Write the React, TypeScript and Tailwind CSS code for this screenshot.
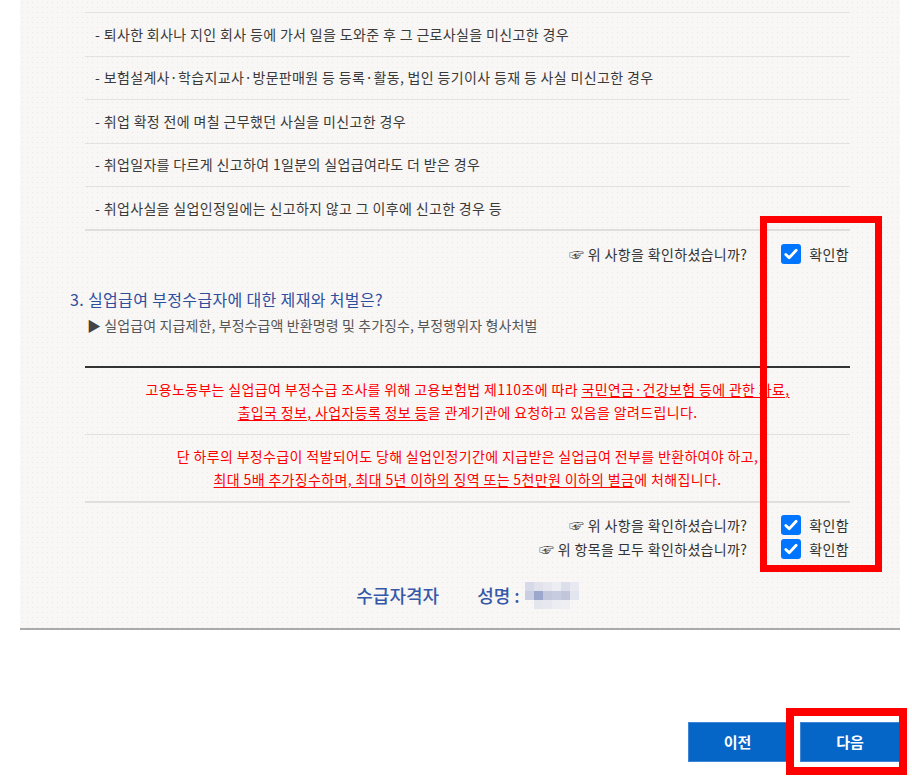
import React from "react";

const FONT = { fontFamily: '"Noto Sans CJK KR", "Noto Sans", sans-serif' };

const rows = [
  "- 퇴사한 회사나 지인 회사 등에 가서 일을 도와준 후 그 근로사실을 미신고한 경우",
  "- 보험설계사·학습지교사·방문판매원 등 등록·활동, 법인 등기이사 등재 등 사실 미신고한 경우",
  "- 취업 확정 전에 며칠 근무했던 사실을 미신고한 경우",
  "- 취업일자를 다르게 신고하여 1일분의 실업급여라도 더 받은 경우",
  "- 취업사실을 실업인정일에는 신고하지 않고 그 이후에 신고한 경우 등",
];

function Check() {
  return (
    <span className="flex h-5 w-5 items-center justify-center rounded-[3px] bg-[#0075ff]">
      <svg viewBox="0 0 20 20" className="h-5 w-5">
        <path
          d="M4.8 10.4l3.4 3.4L15.2 6.2"
          fill="none"
          stroke="white"
          strokeWidth="2.8"
          strokeLinecap="round"
          strokeLinejoin="round"
        />
      </svg>
    </span>
  );
}

function Confirm({ text }: { text: string }) {
  return (
    <div className="flex h-6 items-center justify-end text-[14px] text-[#333]">
      <span>
        <span className="text-[15px]">☞</span>
        {text}
      </span>
      <span className="ml-[34px]">
        <Check />
      </span>
      <span className="ml-2 mr-[1px]">확인함</span>
    </div>
  );
}

const blur = [
  ["bg-[#d6d9e7]", "bg-[#e1e2ec]", "bg-[#e7e8ef]", "bg-[#eceef3]", "bg-[#dcdee9]", "bg-[#e9eaf1]"],
  ["bg-[#c9cee1]", "bg-[#9ba7cc]", "bg-[#c3c8dd]", "bg-[#c8cce0]", "bg-[#c1c6db]", "bg-[#e3e5ee]"],
  ["bg-transparent", "bg-[#e4e6ee]", "bg-[#e6e7ef]", "bg-[#ecedf2]", "bg-[#eeeff3]", "bg-transparent"],
];

export default function App() {
  return (
    <div className="relative h-[781px] w-[912px] overflow-hidden bg-white" style={FONT}>
      <div className="ml-[20px] w-[880px] border-b-2 border-[#aaaaaa] bg-[#f8f7f5] bg-[radial-gradient(circle,#ebe9e5_0.8px,transparent_1px)] bg-[length:5px_5px] pb-[20px] pl-[65px] pr-[50px] tracking-[0.35px]">
        <div className="h-[12px]" />
        <div className="border-t border-[#e3e2df]">
          {rows.map((r, i) => (
            <div
              key={i}
              className={
                i === rows.length - 1
                  ? "flex h-[44px] items-center border-b-2 border-[#dfdedb] pl-[10px] text-[14px] text-[#3a3a3a]"
                  : "flex h-[43.5px] items-center border-b border-[#e3e2df] pl-[10px] text-[14px] text-[#3a3a3a]"
              }
            >
              {r}
            </div>
          ))}
        </div>
        <div className="mt-[11px]">
          <Confirm text=" 위 사항을 확인하셨습니까?" />
        </div>
        <div className="-ml-[15px] mt-[21px] text-[16px] leading-[24px] text-[#2f4e9e]">
          3. 실업급여 부정수급자에 대한 제재와 처벌은?
        </div>
        <div className="ml-[2px] mt-[4px] text-[14px] leading-[20px] tracking-[0.1px] text-[#555]">
          <span className="text-[#444]">▶</span> 실업급여 지급제한, 부정수급액 반환명령 및 추가징수, 부정행위자 형사처벌
        </div>
        <div className="mt-[31px] h-[2px] bg-[#333]" />
        <div className="py-[10px] text-center text-[14px] leading-[23px] text-[#ff0000]">
          <div>
            고용노동부는 실업급여 부정수급 조사를 위해 고용보험법 제110조에 따라{" "}
            <span className="underline underline-offset-2">국민연금·건강보험 등에 관한 자료,</span>
          </div>
          <div>
            <span className="underline underline-offset-2">출입국 정보, 사업자등록 정보 등</span>을 관계기관에 요청하고 있음을 알려드립니다.
          </div>
        </div>
        <div className="h-px bg-[#e0dfdc]" />
        <div className="py-[10px] text-center text-[14px] leading-[23px] text-[#ff0000]">
          <div>단 하루의 부정수급이 적발되어도 당해 실업인정기간에 지급받은 실업급여 전부를 반환하여야 하고,</div>
          <div>
            <span className="underline underline-offset-2">
              최대 5배 추가징수하며, 최대 5년 이하의 징역 또는 5천만원 이하의 벌금
            </span>
            에 처해집니다.
          </div>
        </div>
        <div className="h-[2px] bg-[#e0dfdc]" />
        <div className="mt-[10px]">
          <Confirm text=" 위 사항을 확인하셨습니까?" />
          <Confirm text=" 위 항목을 모두 확인하셨습니까?" />
        </div>
        <div className="mt-[21px] flex h-[26px] items-center justify-center text-[18px] font-medium tracking-normal text-[#3558a8]">
          <span>수급자격자</span>
          <span className="ml-[38px]">성명 :</span>
          <span className="ml-[5px] grid grid-cols-6">
            {blur.flat().map((c, i) => (
              <span key={i} className={"h-[9px] w-[9px] " + c} />
            ))}
          </span>
        </div>
      </div>

      <div className="mt-[92px] flex justify-end gap-[13px] pr-[12px]">
        <button className="h-[40px] w-[99px] border border-[#3f86d6] bg-[#0566c8] text-[15px] font-bold text-white">
          이전
        </button>
        <button className="h-[40px] w-[100px] border border-[#3f86d6] bg-[#0566c8] text-[15px] font-bold text-white">
          다음
        </button>
      </div>

      <div className="pointer-events-none absolute left-[760px] top-[216px] h-[356px] w-[122px] border-[7px] border-[#ff0000]" />
      <div className="pointer-events-none absolute left-[786px] top-[708px] h-[67px] w-[121px] border-[8px] border-[#ff0000]" />
    </div>
  );
}
